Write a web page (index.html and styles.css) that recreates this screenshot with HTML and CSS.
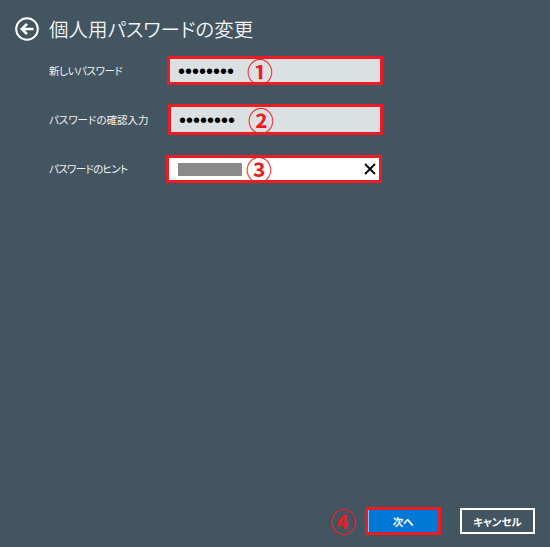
FILE: index.html
```html
<!DOCTYPE html>
<html lang="ja">
<head>
<meta charset="utf-8">
<title>個人用パスワードの変更</title>
<link rel="stylesheet" href="styles.css">
</head>
<body>
<main class="page">
  <header class="header">
    <svg class="back" width="24" height="24" viewBox="0 0 24 24" aria-hidden="true">
      <circle cx="12" cy="12" r="10.8" fill="none" stroke="#fff" stroke-width="2"/>
      <path d="M18.5 12H7.5M12 6.8 6.8 12l5.2 5.200" fill="none" stroke="#fff" stroke-width="2.600"/>
    </svg>
    <h1 class="title">個人用パスワードの変更</h1>
  </header>
  <section class="form">
    <div class="row row-new">
      <span class="label">新しいパスワード</span>
      <div class="field field-new">
        <span class="dots">••••••••</span>
        <span class="mark">①</span>
      </div>
    </div>
    <div class="row row-confirm">
      <span class="label">パスワードの確認入力</span>
      <div class="field field-confirm">
        <span class="dots">••••••••</span>
        <span class="mark">②</span>
      </div>
    </div>
    <div class="row row-hint">
      <span class="label">パスワードのヒント</span>
      <div class="field field-hint">
        <span class="mask"></span>
        <span class="mark">③</span>
        <svg class="clear" width="12" height="12" viewBox="0 0 12 12" aria-hidden="true">
          <path d="M1 1l10 10M11 1 1 11" fill="none" stroke="#000" stroke-width="1.800"/>
        </svg>
      </div>
    </div>
  </section>
  <footer class="footer">
    <span class="mark mark-next">④</span>
    <button class="btn btn-next">次へ</button>
    <button class="btn btn-cancel">キャンセル</button>
  </footer>
</main>
</body>
</html>
```
FILE: styles.css
```css
* { box-sizing: border-box; }
html, body { margin: 0; padding: 0; }
body {
  width: 550px;
  height: 547px;
  overflow: hidden;
  background: #435561;
  font-family: "Noto Sans CJK JP", "Noto Sans", sans-serif;
  color: #fff;
}
.page {
  height: 547px;
  display: flex;
  flex-direction: column;
  padding: 17px 15px 12px 15px;
}
.header {
  display: flex;
  align-items: center;
  gap: 10px;
  height: 24px;
}
.back { flex: none; }
.title {
  margin: 0;
  font-size: 19.500px;
  font-weight: 350;
  line-height: 24px;
  white-space: nowrap;
  color: #f2f4f5;
  font-feature-settings: "palt";
}
.form {
  display: flex;
  flex-direction: column;
  margin-top: 15px;
  padding-left: 34px;
}
.row {
  display: flex;
  align-items: center;
}
.row-confirm { margin-top: 19px; }
.row-hint { margin-top: 20px; }
.label {
  width: 118px;
  flex: none;
  font-size: 10.500px;
  line-height: 14px;
  white-space: nowrap;
  color: #f0f2f3;
  font-feature-settings: "palt";
}
.row-new .label { letter-spacing: -0.4px; }
.row-hint .label { letter-spacing: -0.65px; }
.field {
  width: 216px;
  height: 29px;
  display: flex;
  align-items: center;
  border: 3px solid #ed1c24;
  background: #dbe0e2;
  padding-left: 8px;
  color: #000;
}
.field-confirm { height: 31px; margin-left: 1px; width: 215px; }
.field-hint { height: 28px; margin-left: -1px; background: #fff; padding-left: 9px; }
.dots {
  width: 57px;
  font-family: "Liberation Sans", sans-serif;
  font-size: 20px;
  line-height: 20px;
  white-space: nowrap;
  letter-spacing: 0;
}
.mark {
  flex: none;
  width: 26px;
  margin-left: 12px;
  font-size: 26px;
  font-weight: 700;
  line-height: 26px;
  text-align: center;
  color: #ed1c24;
}
.field-hint .mask {
  width: 64px;
  height: 13px;
  flex: none;
  background: #8a8a8a;
}
.field-hint .mark { margin-left: 4px; }
.clear { margin-left: auto; margin-right: 3px; }
.footer {
  margin-top: auto;
  display: flex;
  align-items: center;
  justify-content: flex-end;
}
.mark-next { margin: 0 9px 0 0; }
.btn {
  font-family: inherit;
  font-size: 10.500px;
  font-weight: 700;
  color: #fff;
  padding: 0;
  cursor: pointer;
  font-feature-settings: "palt";
}
.btn-next {
  width: 76px;
  height: 28px;
  border: 3px solid #ed1c24;
  background: #0078d7;
  box-shadow: inset 1px 0 #8fc1e8;
}
.btn-cancel {
  width: 75px;
  height: 26px;
  margin-left: 19px;
  margin-right: 0;
  border: 2px solid #fff;
  background: transparent;
}
```
